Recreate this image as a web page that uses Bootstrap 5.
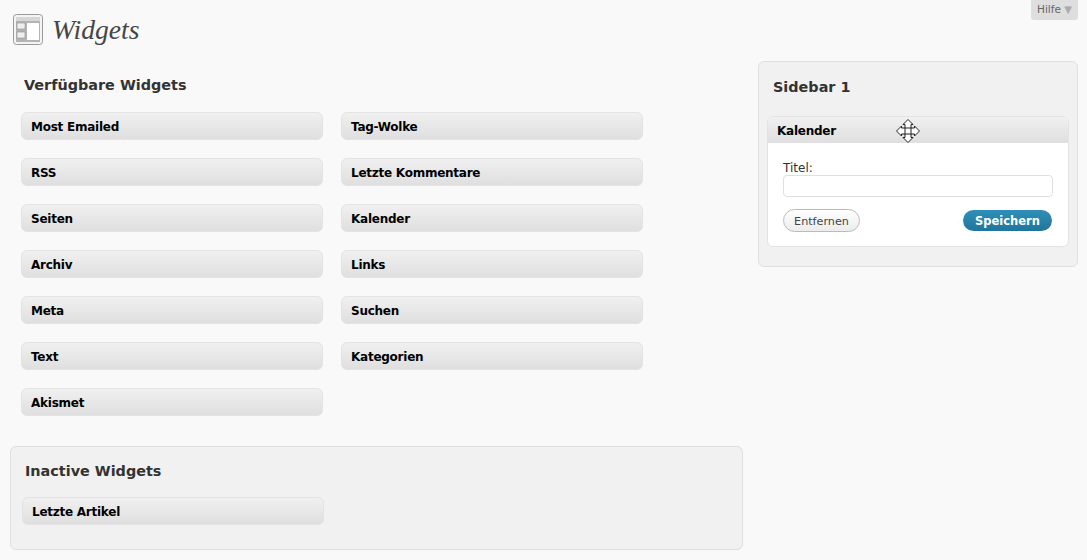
<!DOCTYPE html>
<html lang="de">
<head>
    <meta charset="UTF-8">
    <meta name="viewport" content="width=device-width, initial-scale=1.0">
    <title>Widgets</title>
    <link href="https://cdn.jsdelivr.net/npm/bootstrap@5.3.0/dist/css/bootstrap.min.css" rel="stylesheet">
    <style>
        html, body {
            height: 560px;
            overflow: hidden;
        }
        body {
            background: #f9f9f9;
            color: #333;
            font-family: "DejaVu Sans", sans-serif;
            font-size: 12px;
        }
        .page-head {
            height: 67px;
            padding-left: 13px;
            padding-right: 9px;
        }
        .page-title {
            font-family: "Liberation Serif", serif;
            font-style: italic;
            font-size: 27.6px;
            font-weight: 400;
            color: #464646;
            margin: 14px 0 0 9px;
            line-height: 32px;
        }
        .head-icon {
            margin-top: 14px;
        }
        .help-tab {
            width: 47px;
            height: 20px;
            background: #dedede;
            border-radius: 0 0 3px 3px;
            color: #666;
            font-size: 10.5px;
            line-height: 19px;
            padding-left: 6px;
        }
        .help-arrow {
            color: #aaa;
            font-size: 10px;
        }
        .main-col {
            width: 733px;
            margin-left: 10px;
        }
        .side-col {
            width: 320px;
            margin-left: 15px;
            margin-top: -6px;
        }
        .sec-title {
            font-size: 14.4px;
            font-weight: 700;
            color: #333;
            line-height: 18px;
            margin: 0;
        }
        .avail-title {
            padding: 9px 0 0 14px;
            height: 45px;
        }
        .avail-grid {
            display: grid;
            grid-template-columns: 302px 302px;
            column-gap: 18px;
            row-gap: 18px;
            padding-left: 11px;
        }
        .wgt-item {
            height: 28px;
            border: 1px solid #e3e3e3;
            border-radius: 6px;
            background: linear-gradient(#f0f0f0, #dfdfdf);
            color: #000;
            font-size: 12px;
            font-weight: 700;
            letter-spacing: -0.25px;
            line-height: 28px;
            padding-left: 9px;
        }
        .inactive-box {
            margin-top: 30px;
            height: 104px;
            background: #f1f1f1;
            border: 1px solid #dfdfdf;
            border-radius: 6px;
            padding: 15px 0 0 11px;
        }
        .inactive-box .sec-title {
            padding-left: 3px;
            height: 35px;
        }
        .inactive-box .wgt-item {
            width: 302px;
        }
        .side-box {
            height: 206px;
            background: #f1f1f1;
            border: 1px solid #dfdfdf;
            border-radius: 6px;
            padding: 16px 8px 0 8px;
        }
        .side-box .sec-title {
            padding-left: 6px;
            height: 38px;
        }
        .open-wgt {
            background: #fff;
            border: 1px solid #e3e3e3;
            border-radius: 6px;
            height: 131px;
        }
        .open-head {
            height: 26px;
            background: linear-gradient(#f0f0f0, #dfdfdf);
            border-radius: 5px 5px 0 0;
            color: #000;
            font-weight: 700;
            letter-spacing: -0.25px;
            line-height: 28px;
            padding-left: 9px;
        }
        .move-cursor {
            position: absolute;
            left: 128px;
            top: 2px;
        }
        .open-body {
            padding: 18px 15px 0 15px;
        }
        .field-label {
            display: block;
            font-size: 12px;
            line-height: 14px;
            color: #333;
            margin: 0;
        }
        .field-input {
            display: block;
            width: 270px;
            height: 22px;
            margin-top: 0;
            border: 1px solid #dfdfdf;
            border-radius: 4px;
            background: #fff;
            padding: 0;
        }
        .btn-remove {
            width: 77px;
            height: 23px;
            border: 1px solid #bbb;
            border-radius: 12px;
            background: linear-gradient(#fff, #ececec);
            color: #464646;
            font-size: 11.2px;
            line-height: 22px;
            padding: 1px 0 0;
        }
        .btn-save {
            width: 89px;
            height: 21px;
            border: 0;
            border-radius: 11px;
            background: linear-gradient(#2f8fb8, #21759b);
            color: #fff;
            font-size: 11.5px;
            font-weight: 700;
            line-height: 20px;
            padding: 1px 0 0;
        }
        .btn-row {
            margin-top: 12px;
            padding-right: 1px;
        }
    </style>
</head>
<body>

    <!-- Kopfzeile -->
    <div class="page-head d-flex align-items-start">
        <svg class="head-icon" width="30" height="31" viewBox="0 0 30 31">
            <rect x="0.5" y="0.5" width="29" height="30" rx="3" fill="#f4f4f4" stroke="#9a9a9a"/>
            <rect x="3" y="3" width="24" height="25" fill="#b4b4b4"/>
            <rect x="3" y="3" width="24" height="4" fill="#d6d6d6"/>
            <rect x="4" y="9" width="8" height="6" fill="#eee" stroke="#8f8f8f" stroke-width="0.6"/>
            <rect x="4" y="18" width="8" height="6" fill="#eee" stroke="#8f8f8f" stroke-width="0.6"/>
            <rect x="14" y="9" width="12" height="17" fill="#fff"/>
        </svg>
        <h1 class="page-title">Widgets</h1>
        <div class="help-tab ms-auto">Hilfe <span class="help-arrow">▼</span></div>
    </div>

    <div class="d-flex align-items-start">
        <!-- Verfuegbare Widgets -->
        <div class="main-col">
            <h3 class="sec-title avail-title">Verfügbare Widgets</h3>
            <div class="avail-grid">
                <div class="wgt-item">Most Emailed</div>
                <div class="wgt-item">Tag-Wolke</div>
                <div class="wgt-item">RSS</div>
                <div class="wgt-item">Letzte Kommentare</div>
                <div class="wgt-item">Seiten</div>
                <div class="wgt-item">Kalender</div>
                <div class="wgt-item">Archiv</div>
                <div class="wgt-item">Links</div>
                <div class="wgt-item">Meta</div>
                <div class="wgt-item">Suchen</div>
                <div class="wgt-item">Text</div>
                <div class="wgt-item">Kategorien</div>
                <div class="wgt-item">Akismet</div>
            </div>
            <div class="inactive-box">
                <h3 class="sec-title">Inactive Widgets</h3>
                <div class="wgt-item">Letzte Artikel</div>
            </div>
        </div>

        <!-- Sidebar -->
        <div class="side-col">
            <div class="side-box">
                <h3 class="sec-title">Sidebar 1</h3>
                <div class="open-wgt">
                    <div class="open-head position-relative">
                        Kalender
                        <svg class="move-cursor" width="24" height="24" viewBox="0 0 24 24">
                            <path d="M12 .5 L17 5.500 H15 V9 H18.500 V7 L23.500 12 L18.500 17 V15 H15 V18.500 H17 L12 23.500 L7 18.500 H9 V15 H5.500 V17 L.5 12 L5.500 7 V9 H9 V5.500 H7 Z" fill="#fff" stroke="#222" stroke-width="1"/>
                            <path d="M9 9 V15 M15 9 V15 M9 9 H15 M9 15 H15" stroke="#222" stroke-width="1" fill="none"/>
                        </svg>
                    </div>
                    <div class="open-body">
                        <label class="field-label" for="titel">Titel:</label>
                        <input class="field-input" id="titel" type="text">
                        <div class="btn-row d-flex justify-content-between align-items-center">
                            <button class="btn-remove" type="button">Entfernen</button>
                            <button class="btn-save" type="button">Speichern</button>
                        </div>
                    </div>
                </div>
            </div>
        </div>
    </div>

    <script src="https://cdn.jsdelivr.net/npm/bootstrap@5.3.0/dist/js/bootstrap.bundle.min.js"></script>
</body>
</html>
